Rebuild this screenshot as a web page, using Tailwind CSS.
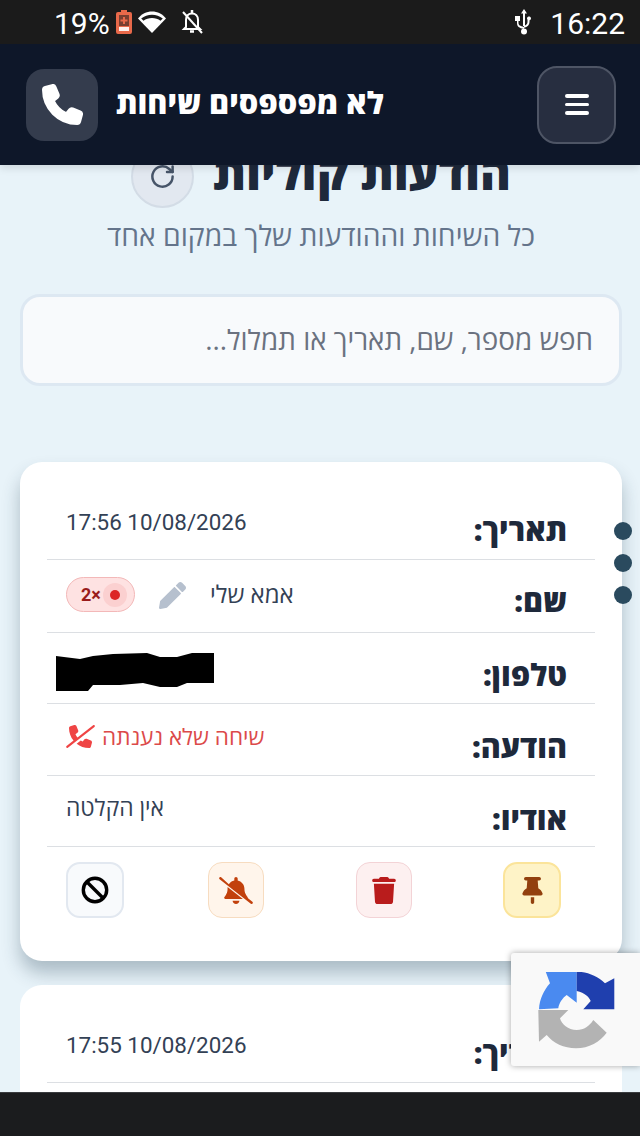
<!DOCTYPE html>
<html lang="he" dir="rtl">
<head>
<meta charset="utf-8">
<script src="https://cdn.jsdelivr.net/npm/@tailwindcss/browser@4"></script>
</head>
<body class="m-0 bg-[#e8f3f9] font-['Open_Sans','Liberation_Sans',sans-serif]">
<div class="relative w-[640px] h-[1136px] overflow-hidden flex flex-col bg-[#e8f3f9]">

  <!-- status bar -->
  <div dir="ltr" class="h-[44px] shrink-0 bg-[#1b1b1b] flex items-center text-white text-[30px] leading-none z-20 font-['Roboto',sans-serif]">
    <span class="ml-[54px] w-[54px] pt-[3px]">19%</span>
    <svg class="ml-[8px]" width="16" height="24" viewBox="0 0 16 24"><path fill="#e8694a" d="M5 0h6v2h3a2 2 0 0 1 2 2v18a2 2 0 0 1-2 2H2a2 2 0 0 1-2-2V4a2 2 0 0 1 2-2h3z"/><path fill="#fff" d="M3 17h10v4H3z" opacity=".9"/><path fill="#1b1b1b" opacity=".55" d="M3 5h10v11H3z"/><path fill="#e8694a" d="M7 7h2v2.500h2.500v2H9V14H7v-2.500H4.500v-2H7z"/></svg>
    <svg class="ml-[6px]" width="28" height="24" viewBox="0 0 28 24"><path fill="#fff" d="M14 23 0 8.500C3.500 4 8.500 1.500 14 1.500S24.500 4 28 8.500z"/><path fill="#1b1b1b" d="M14 8C10.800 8 7.800 9 5.500 10.800L3.200 8.600C6.200 6.200 10 4.700 14 4.700s7.800 1.500 10.800 3.900l-2.300 2.200C20.200 9 17.200 8 14 8z"/></svg>
    <svg class="ml-[15px]" width="22" height="26" viewBox="0 0 22 26" fill="none" stroke="#fff" stroke-width="2"><path d="M5 18V11c0-4 2.500-6.500 6-6.500s6 2.500 6 6.500v7l2 2H3z"/><path d="M9 22.500h4" stroke-width="2.500"/><path d="M11 1v3" stroke-width="2.500"/><path d="M2 3l19 21" stroke-width="2"/></svg>
    <div class="flex-1"></div>
    <svg class="mr-[17px]" width="18" height="26" viewBox="0 0 18 26" fill="#fff"><path d="M9 0l3 4.500h-2V17h-2V4.500H6z"/><path d="M0 7h5v5H3.500v2c0 2 1.500 3 5.500 4v2c-5-1-7-2.500-7-6v-2H0z"/><path d="M14.500 7.500a2 2 0 1 1-1 0zM12.500 10h2v3c0 3-2 4.800-5.500 5.800v-2c2.500-.8 3.500-1.800 3.500-3.800z"/><circle cx="9" cy="22.500" r="3"/></svg>
    <span class="mr-[15px] pt-[3px]">16:22</span>
  </div>

  <!-- header -->
  <header dir="ltr" class="h-[121px] shrink-0 bg-[#0e1729] flex items-center justify-between pl-[26px] pr-[24px] z-10 shadow-[0_3px_8px_rgba(0,0,0,0.12)]">
    <div class="flex items-center gap-[18px]">
      <div class="w-[72px] h-[72px] rounded-[18px] bg-[#343c4d] flex items-center justify-center">
        <svg width="41" height="41" viewBox="-12 -12 536 536"><path fill="#fff" stroke="#fff" stroke-width="24" stroke-linejoin="round" d="M164.900 24.600c-7.700-18.600-28-28.500-47.400-23.200l-88 24C12.100 30.200 0 46 0 64C0 311.400 200.600 512 448 512c18 0 33.800-12.100 38.600-29.500l24-88c5.300-19.400-4.600-39.700-23.200-47.400l-96-40c-16.300-6.800-35.200-2.100-46.300 11.600L304.700 368C234.300 334.700 177.300 277.700 144 207.300L193.300 167c13.700-11.200 18.400-30 11.600-46.300l-40-96z"/></svg>
      </div>
      <div dir="rtl" class="text-white text-[30.600px] font-extrabold leading-none whitespace-nowrap mb-[4px]">לא מפספסים שיחות</div>
    </div>
    <button class="w-[79px] h-[78px] rounded-[20px] bg-[#272e40] border-2 border-[#4e5565] flex flex-col items-center justify-center gap-[5px]">
      <span class="block w-[24px] h-[3.500px] rounded-full bg-white"></span>
      <span class="block w-[24px] h-[3.500px] rounded-full bg-white"></span>
      <span class="block w-[24px] h-[3.500px] rounded-full bg-white"></span>
    </button>
  </header>

  <!-- content -->
  <main class="flex-1 min-h-0 overflow-hidden pl-[20px] pr-[18px] -mt-[30px]">
    <div class="flex items-center justify-center gap-[19px] h-[68px] pt-[6px]">
      <h1 class="text-[47px] font-extrabold text-[#1e293b] leading-none whitespace-nowrap">הודעות קוליות</h1>
      <div class="mt-[8px] w-[63px] h-[63px] rounded-full bg-[#e2e8f0] border-2 border-[#d3dce6] flex items-center justify-center">
        <svg width="27" height="27" viewBox="0 0 24 24" fill="none" stroke="#475569" stroke-width="2.200" stroke-linecap="round" stroke-linejoin="round"><path d="M21 12a9 9 0 1 1-3-6.700L21 8"/><path d="M21 3v5h-5"/></svg>
      </div>
    </div>
    <p class="text-center text-[28.300px] text-[#64748b] leading-none mt-[18px]">כל השיחות וההודעות שלך במקום אחד</p>

    <div class="mt-[45px] h-[92px] rounded-[20px] border-[3px] border-[#dde8f2] bg-[#f8fafc] flex items-center px-[26px] text-[27.800px] text-[#6b7280]">חפש מספר, שם, תאריך או תמלול...</div>

    <!-- card 1 -->
    <article class="mt-[76px] h-[499px] rounded-[22px] bg-white shadow-[0_12px_18px_rgba(30,60,80,0.3)] px-[27px] pt-[26px]">
      <div class="h-[72px] border-b border-[#dcdfe3] flex justify-between pr-[28px] pl-[19px]">
        <span class="text-[30.400px] font-extrabold text-[#1e293b] pt-[24px] leading-[36px]">תאריך:</span>
        <span dir="ltr" class="text-[22.400px] font-['Roboto',sans-serif] text-[#334155] pt-[22px] leading-[24px]">17:56 10/08/2026</span>
      </div>
      <div class="h-[73px] border-b border-[#dcdfe3] flex justify-between pr-[28px] pl-[19px]">
        <span class="text-[30.400px] font-extrabold text-[#1e293b] pt-[23px] leading-[36px]">שם:</span>
        <div class="flex items-start gap-[24px] pt-[17px]">
          <span class="text-[24px] text-[#334155] leading-[34px]">אמא שלי</span>
          <svg class="mt-[5px]" width="27" height="27" viewBox="0 0 512 512"><path fill="#b6c0ce" d="M497.900 142.100l-46.100 46.100c-4.700 4.700-12.300 4.700-17 0l-111-111c-4.700-4.700-4.700-12.300 0-17l46.100-46.100c18.700-18.700 49.100-18.700 67.900 0l60.100 60.100c18.800 18.700 18.800 49.100 0 67.900zM284.200 99.800L21.600 362.400.4 483.900c-2.900 16.400 11.400 30.600 27.800 27.800l121.500-21.300 262.600-262.600c4.700-4.700 4.700-12.300 0-17l-111-111c-4.800-4.700-12.400-4.700-17.100 0z"/></svg>
          <div dir="ltr" class="w-[69px] h-[35px] rounded-full bg-[#fee2e2] border border-[#f3b8b8] flex items-center pl-[14px] gap-[2px] font-['Roboto',sans-serif]">
            <span class="text-[18px] font-bold text-[#991b1b] leading-none">2×</span>
            <span class="w-[24px] h-[24px] rounded-full bg-[#fbd0d0] flex items-center justify-center"><span class="block w-[10px] h-[10px] rounded-full bg-[#dc2626]"></span></span>
          </div>
        </div>
      </div>
      <div class="h-[71px] border-b border-[#dcdfe3] flex justify-between pr-[28px] pl-[9px]">
        <span class="text-[30.400px] font-extrabold text-[#1e293b] pt-[24px] leading-[36px]">טלפון:</span>
        <svg class="mt-[20px]" width="158" height="38" viewBox="0 0 158 38"><path fill="#000" d="M0 3 24 6 37 3 57 1 91 0 104 4 121 4 136 0H158V30H131L121 34H104L87 30 64 32H37L32 38H0z"/></svg>
      </div>
      <div class="h-[72px] border-b border-[#dcdfe3] flex justify-between pr-[28px] pl-[19px]">
        <span class="text-[30.400px] font-extrabold text-[#1e293b] pt-[25px] leading-[36px]">הודעה:</span>
        <div class="flex items-start gap-[7px] pt-[18px] text-[#dc4a4a]">
          <span class="text-[22.500px] leading-[30px]">שיחה שלא נענתה</span>
          <svg class="mt-[3px]" width="29" height="23" viewBox="0 0 640 512"><path fill="#ef4444" d="M228.900 24.600c-7.700-18.600-28-28.500-47.400-23.200l-88 24C76.100 30.200 64 46 64 64c0 107.400 37.800 206 100.800 283.100L9.200 469.100c-10.400 8.200-12.300 23.300-4.100 33.700s23.300 12.300 33.700 4.100l592-464c10.400-8.200 12.300-23.300 4.100-33.700s-23.300-12.300-33.700-4.100L253 278c-17.800-21.500-32.900-45.200-45-70.700L257.300 167c13.700-11.200 18.400-30 11.600-46.300l-40-96zm96.800 319l-91.300 71.600C310.100 474.200 404.700 512 512 512c18 0 33.800-12.100 38.600-29.500l24-88c5.300-19.400-4.600-39.700-23.200-47.400l-96-40c-16.300-6.800-35.200-2.100-46.300 11.600L368.700 368c-15-7.100-29.300-15.200-43-24.400z"/></svg>
        </div>
      </div>
      <div class="h-[71px] border-b border-[#dcdfe3] flex justify-between pr-[28px] pl-[19px]">
        <span class="text-[30.400px] font-extrabold text-[#1e293b] pt-[25px] leading-[36px]">אודיו:</span>
        <span class="text-[22.800px] text-[#334155] pt-[17px] leading-[30px]">אין הקלטה</span>
      </div>
      <div class="flex items-start pt-[15px] pr-[34px]">
        <button class="w-[58px] h-[56px] rounded-[14px] bg-[#fef3c7] border-2 border-[#fbe49a] flex items-center justify-center">
          <svg width="21" height="27" viewBox="0 0 384 512"><path fill="#92400e" d="M32 32C32 14.300 46.300 0 64 0H320c17.700 0 32 14.300 32 32s-14.300 32-32 32H290.500l11.400 148.200c36.700 19.900 65.700 53.200 79.500 94.700l1 3c3.300 9.800 1.600 20.500-4.400 28.800s-15.700 13.300-26 13.300H32c-10.300 0-19.900-4.900-26-13.300s-7.700-19.100-4.400-28.800l1-3c13.800-41.500 42.800-74.800 79.500-94.700L93.500 64H64C46.300 64 32 49.700 32 32zM160 384h64v96c0 17.700-14.300 32-32 32s-32-14.300-32-32V384z"/></svg>
        </button>
        <button class="ms-[91px] w-[56px] h-[56px] rounded-[14px] bg-[#fdf0f0] border border-[#f3d3d6] flex items-center justify-center">
          <svg width="24" height="27" viewBox="0 0 448 512"><path fill="#b91c1c" d="M135.200 17.700L128 32H32C14.300 32 0 46.300 0 64S14.300 96 32 96H416c17.700 0 32-14.300 32-32s-14.300-32-32-32H320l-7.200-14.300C307.400 6.800 296.300 0 284.200 0H163.800c-12.100 0-23.200 6.800-28.600 17.700zM416 128H32L53.200 467c1.600 25.300 22.600 45 47.900 45H346.900c25.300 0 46.300-19.700 47.900-45L416 128z"/></svg>
        </button>
        <button class="ms-[92px] w-[56px] h-[56px] rounded-[14px] bg-[#fff5eb] border border-[#f7dcc0] flex items-center justify-center">
          <svg width="34" height="27" viewBox="0 0 640 512"><path fill="#c2410c" d="M38.800 5.100C28.400-3.100 13.300-1.200 5.100 9.200S-1.200 34.700 9.200 42.900l592 464c10.400 8.200 25.500 6.300 33.700-4.100s6.300-25.500-4.100-33.700L542.600 400c2.700-7.800 1.300-16.500-3.900-23l-14.900-18.600C495.500 322.900 480 278.800 480 233.400V224c0-77.400-55-142-128-156.800V32c0-17.700-14.300-32-32-32s-32 14.300-32 32V67.200c-43.700 8.900-81 35.600-103.900 72.100L38.800 5.100zM160 233.400c0 45.400-15.500 89.500-43.800 124.900L101.300 377c-5.800 7.200-6.900 17.100-2.900 25.400s12.400 13.600 21.600 13.600H450.400L160 189.400v44zM384 448H320 256c0 17 6.700 33.300 18.700 45.300s28.300 18.700 45.300 18.700s33.300-6.700 45.300-18.700s18.700-28.300 18.700-45.300z"/></svg>
        </button>
        <button class="ms-[84px] w-[58px] h-[56px] rounded-[14px] bg-[#f8fafc] border-2 border-[#e2e8f0] flex items-center justify-center">
          <svg width="28" height="28" viewBox="0 0 28 28" fill="none" stroke="#000" stroke-width="3.400"><circle cx="14" cy="14" r="11.700"/><path d="M6 6l16 16"/></svg>
        </button>
      </div>
    </article>

    <!-- card 2 -->
    <article class="mt-[24px] h-[200px] rounded-t-[22px] bg-white px-[27px] pt-[26px]">
      <div class="h-[72px] border-b border-[#dcdfe3] flex justify-between pr-[28px] pl-[19px]">
        <span class="text-[30.400px] font-extrabold text-[#1e293b] pt-[24px] leading-[36px]">תאריך:</span>
        <span dir="ltr" class="text-[22.400px] font-['Roboto',sans-serif] text-[#334155] pt-[22px] leading-[24px]">17:55 10/08/2026</span>
      </div>
    </article>
  </main>

  <!-- bottom bar -->
  <div class="h-[44px] shrink-0 bg-[#1b1c1e] border-t border-[#3a3c3f] z-10"></div>

  <!-- carousel dots -->
  <div class="absolute left-[614px] top-[522px] flex flex-col gap-[14px]">
    <span class="block w-[18px] h-[18px] rounded-full bg-[#2a4a5e]"></span>
    <span class="block w-[18px] h-[18px] rounded-full bg-[#2a4a5e]"></span>
    <span class="block w-[18px] h-[18px] rounded-full bg-[#2a4a5e]"></span>
  </div>

  <!-- recaptcha badge -->
  <div dir="ltr" class="absolute left-[511px] top-[953px] w-[129px] h-[113px] bg-[#f9f9f9] rounded-l-[3px] shadow-[0_0_6px_rgba(0,0,0,0.35)] pl-[27px] pt-[19px]">
    <svg width="78" height="77" viewBox="0 0 78 77">
      <path fill="#b3b3b3" d="M.3 38H30.300L22 46.300C23.500 52 30 58 38.700 58 46 58 51.500 54 55.300 48L68.700 60.700C62 70 51 76.300 38 76.300 26 76.300 15 71 8.700 63L1 69.700z"/>
      <path fill="#4a8af0" d="M1 37.300C1.500 27 6 18 12 11.300L7.700-.3H38.700V30.700L28.700 23C24.500 26 21 31 20.300 36.300z"/>
      <path fill="#1f3fae" d="M38.700-.3C49-.3 59.500 4 67 11.300L76.300 6.300V37.300H45.300L52.700 29C51 25 47 21 38.700 19z"/>
    </svg>
  </div>
</div>
</body>
</html>
